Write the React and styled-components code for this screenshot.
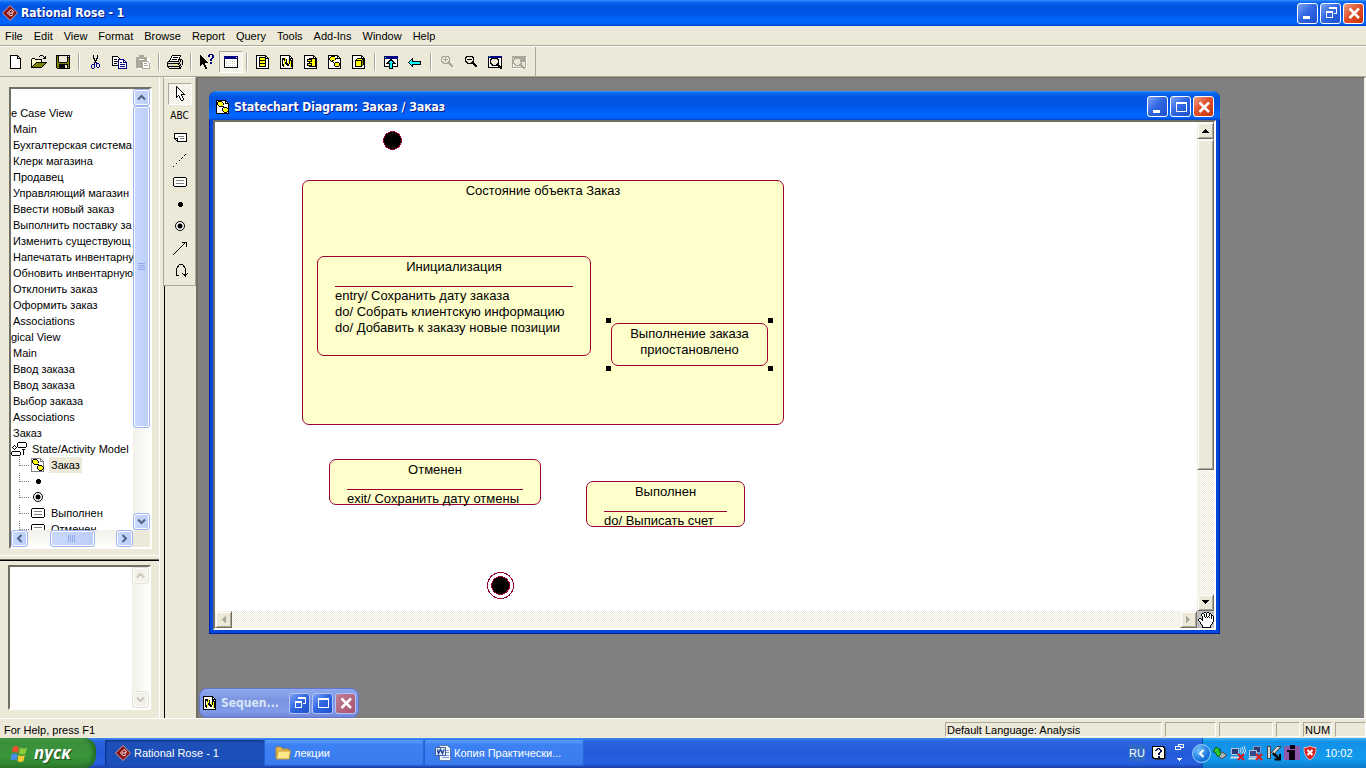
import React from "react";
import styled, { createGlobalStyle, css } from "styled-components";

const FACE = "#ece9d8";
const SHADE = "#aca899";
const DARK = "#716f64";
const WINE = "#990033";
const NOTE = "#ffffcc";

const GlobalStyle = createGlobalStyle`
  * { box-sizing: border-box; }
  body { margin: 0; background: #808080; }
  button { padding: 0; border: 0; margin: 0; background: none; font: inherit; color: inherit; }
  ul, ol { list-style: none; margin: 0; padding: 0; }
  svg { display: block; flex: none; }
`;

const Screen = styled.div`
  display: flex;
  flex-direction: column;
  height: 100vh;
  min-height: 600px;
  overflow: hidden;
  background: ${FACE};
  color: #000;
  font: 11px/16px "Liberation Sans", Arial, sans-serif;
`;

/* ---------- icons ---------- */

const Svg = ({ w = 16, h = 16, smooth, children }) => (
  <svg
    width={w}
    height={h}
    viewBox={`0 0 ${w} ${h}`}
    fill="none"
    shapeRendering={smooth ? "auto" : "crispEdges"}
    aria-hidden="true"
  >
    {children}
  </svg>
);

const Pixels = ({ rows, colors }) => {
  const palette = { "#": "#000", w: "#fff", ...colors };
  return (
    <Svg w={rows[0].length} h={rows.length}>
      {rows.flatMap((row, y) =>
        [...row].map((c, x) =>
          palette[c] ? <rect key={`${x}-${y}`} x={x} y={y} width="1" height="1" fill={palette[c]} /> : null
        )
      )}
    </Svg>
  );
};

const RoseIcon = () => (
  <Svg smooth>
    <path d="M8 .5 15.5 8 8 15.5.5 8z" fill="#8c1010" stroke="#c9a9a0" />
    <path d="M11.500 6.500 9 4.500 5.500 8 8.500 11l2.500-1.500M7 8h4V6.500" stroke="#fff" />
  </Svg>
);

const NewIcon = () => (
  <Svg>
    <path d="M3.500 1.500h7l3 3v10h-10z" fill="#fff" stroke="#000" />
    <path d="M10.500 1.500v3h3" stroke="#000" />
  </Svg>
);

const OpenIcon = () => (
  <Pixels
    colors={{ y: "#ffff99", o: "#808000" }}
    rows={[
      "................",
      ".........###....",
      "........#...#.#.",
      ".............##.",
      ".###........###.",
      "#ywy#######.....",
      "#wywywywyw#.....",
      "#ywywywywy#.....",
      "#wywy###########",
      "#ywy#ooooooooo#.",
      "#wy#ooooooooo#..",
      "#y#ooooooooo#...",
      "##ooooooooo#....",
      "###########.....",
      "................",
      "................",
    ]}
  />
);

const SaveIcon = () => (
  <Pixels
    colors={{ o: "#808000", g: "#ece9d8" }}
    rows={[
      "................",
      ".##############.",
      ".#o#gggggggg#g#.",
      ".#o#gggggggg###.",
      ".#o#gggggggg#o#.",
      ".#o#gggggggg#o#.",
      ".#o#gggggggg#o#.",
      ".#o#gggggggg#o#.",
      ".#oo########oo#.",
      ".#oooooooooooo#.",
      ".#oo#########o#.",
      ".#oo######gg#o#.",
      ".#oo######gg#o#.",
      ".#oo######gg#o#.",
      "..#############.",
      "................",
    ]}
  />
);

const CutIcon = () => (
  <Pixels
    colors={{ b: "#000080" }}
    rows={[
      "................",
      "......#...#.....",
      "......#...#.....",
      "......#...#.....",
      "......##.##.....",
      ".......#.#......",
      ".......###......",
      "........#.......",
      ".......b#b......",
      ".......b.bbb....",
      ".....bbb.b..b...",
      "....b..b.b..b...",
      "....b..b.b..b...",
      "....b..b..bb....",
      ".....bb.........",
      "................",
    ]}
  />
);

const CopyIcon = () => (
  <Svg>
    <path d="M1.500 2.500h5l2 2v7h-7z" fill="#fff" stroke="#000" />
    <path d="M3 5.500h3M3 7.500h4M3 9.500h3" stroke="#000" />
    <path d="M7.500 5.500h5l3 3v6h-8z" fill="#fff" stroke="#000080" />
    <path d="M12.500 5.500v3h3M9 8.500h2M9 10.500h5M9 12.500h5" stroke="#000080" />
  </Svg>
);

const PasteIcon = () => (
  <Svg>
    <path d="M2 4h13v11H2z" fill="#fff" />
    <path d="M1 3h3V1h5v2h3v4H7v7H1z" fill={SHADE} />
    <path d="M4 5h5" stroke="#fff" />
    <path d="M7.500 7.500h5l2 2v5h-7z" fill="#fff" stroke={SHADE} />
    <path d="M9 9.500h3M9 11.500h4" stroke={SHADE} />
  </Svg>
);

const PrintIcon = () => (
  <Pixels
    colors={{ g: "#dddacb", y: "#ffff00", d: "#808080" }}
    rows={[
      "................",
      ".....#########..",
      "....#wwwwwwww#..",
      "....#w#####w#...",
      "...#wwwwwwww#...",
      "...#w#####w####.",
      "..#wwwwwwww#g#g#",
      ".###########g#g#",
      "#ggggggggggg#gg#",
      "#############gg#",
      "#gggggggyyg#g#g#",
      "#ggggggggggg##..",
      "#############g#.",
      ".#gggggggggg##..",
      "..############..",
      "................",
    ]}
  />
);

const HelpPointerIcon = () => (
  <Pixels
    colors={{ b: "#000080" }}
    rows={[
      "..........bbbb..",
      ".#.......bb..bb.",
      ".##......bb..bb.",
      ".###.........bb.",
      ".####.......bb..",
      ".#####.....bb...",
      ".######....bb...",
      ".#######........",
      ".########..bb...",
      ".#####.....bb...",
      ".##.##..........",
      ".#...##.........",
      ".....##.........",
      "......##........",
      "......##........",
      "................",
    ]}
  />
);

const WindowIcon = () => (
  <Svg>
    <path d="M1.500 2.500h13v11h-13z" fill="#fff" stroke="#000" />
    <path d="M1 2h14v3H1z" fill="#000080" />
    <path d="M13 3.500h1" stroke="#fff" />
    <path d="M3 7.500h10M3 9.500h10M3 11.500h10" stroke="#d4d0c4" strokeDasharray="1 1" />
  </Svg>
);

const Page = ({ edge = "#000", children }) => (
  <Svg>
    <path d="M1.500 1.500h9l3 3v10h-12z" fill="#fff" stroke={edge} />
    <path d="M10.500 1.500v3h3" stroke={edge} />
    {children}
  </Svg>
);

const ClassIcon = () => (
  <Page>
    <path d="M4.500 3.500h6v9h-6z" fill="#ff0" stroke="#000" />
    <path d="M4 6.500h6M4 9.500h6" stroke="#000" />
  </Page>
);

const SequenceIcon = () => (
  <Page>
    <path d="M5 7h1v5H5zM6 4h1v4H6zM9 7h1v5H9zM11 7h1v6h-1z" fill="#ff0" />
    <path
      d="M3.500 4v8M4.500 4v2M5.500 4v3M7.500 5v6M8.500 9v3M10.500 5v5M12.500 6v7M6.500 8v2M9.500 10v2M11.500 5v2M4.500 10v3"
      stroke="#000"
    />
  </Page>
);

const ComponentIcon = () => (
  <Page>
    <path d="M6.500 4.500h6v8h-6z" fill="#ff0" stroke="#000" />
    <path d="M4.500 5.500h4v2h-4zM4.500 9.500h4v2h-4z" fill="#ff0" stroke="#000" />
  </Page>
);

const StateIcon = () => (
  <Page>
    <path d="M4 3h4v1h1v2H8v1H4V6H3V4h1zM9 8h3v1h1v3h-1v1H8v-1H7V9h2z" fill="#ff0" />
    <path d="M4 2.500h4M3.500 3v1M2.500 4v2M3.500 6v1M4 7.500h2M8 4.500h2M8.500 5v1M8 8.500h4M7.500 9v3M12.500 9v3M8 12.500h4M6 8.500h1M5 6.500h2" stroke="#000" />
  </Page>
);

const StatechartIcon = ({ edge }) => (
  <Page edge={edge}>
    <path d="M3 3h4v1h1v3H4V6H3zM9 9h3v1h1v3H9v-1H8v-2h1z" fill="#ff0" />
    <path
      d="M3 2.500h4M2.500 3v3M7.500 3v1M8.500 4v2M3 6.500h1M4 7.500h3M7 7.500h2M8 8.500h4M7.500 9v3M12.500 9v1M13.500 10v2M12.500 12v1M8 12.500h1M9 13.500h3"
      stroke="#000"
    />
  </Page>
);

const DeployIcon = () => (
  <Page>
    <path d="M4.500 6.500l2-2h6v6l-2 2h-6z" fill="#ff0" stroke="#000" />
    <path d="M4.500 6.500h6v6M10.500 6.500l2-2" stroke="#000" />
    <path d="M11.500 6v6" stroke="#808000" />
  </Page>
);

const ParentIcon = () => (
  <Svg>
    <path d="M1.500 2.500h13v10h-13z" fill="#fff" stroke="#000" />
    <path d="M1 2h14v3H1z" fill="#000080" />
    <path d="M2 3.500h1" stroke="#0f0" />
    <path d="M8 5.500l4 4H9.500v5h-3v-5H4z" fill="#0ff" stroke="#000" />
  </Svg>
);

const BackIcon = () => (
  <Svg>
    <path d="M1.500 8.500l4-4v2.500h8v3h-8v2.500z" fill="#0ff" stroke="#000" />
  </Svg>
);

const Lens = ({ cx = 6, cy = 6, color = "#000", sign }) => (
  <>
    <path
      d={`M${cx - 1.5} ${cy - 4}h4l2 2v3l-2 2h-4l-2-2v-3z`}
      fill={color === "#000" ? "#ece9d8" : "none"}
      stroke={color}
    />
    {sign && <path d={sign} stroke={color} />}
    <path d={`M${cx + 3} ${cy + 2}l5 5`} stroke={color} strokeWidth="2" />
  </>
);

const ZoomInIcon = () => (
  <Svg>
    <path d="M10 9l6 6" stroke="#fff" />
    <Lens color={SHADE} sign="M4 5.500h5M6.500 3v5" />
  </Svg>
);
const ZoomOutIcon = () => (
  <Svg>
    <Lens sign="M4 5.500h5" />
  </Svg>
);
const FitIcon = () => (
  <Svg>
    <path d="M1.500 2.500h13v11h-13z" fill="#fff" stroke="#000" />
    <path d="M1 2h14v2H1z" fill="#000080" />
    <path d="M2 2.500h1" stroke="#0f0" />
    <Lens cx={7} cy={8} />
  </Svg>
);
const UndoFitIcon = () => (
  <Svg>
    <path d="M2.500 3.500h13v11h-13z" stroke="#fff" />
    <path d="M1.500 2.500h13v11h-13z" stroke={SHADE} />
    <path d="M1 2h14v2H1zM9 4h5v4H9z" fill={SHADE} />
    <Lens cx={6} cy={8} color={SHADE} />
  </Svg>
);

const PointerIcon = () => (
  <Pixels
    rows={[
      "....#...........",
      "....##..........",
      "....#w#.........",
      "....#ww#........",
      "....#www#.......",
      "....#wwww#......",
      "....#wwwww#.....",
      "....#wwwwww#....",
      "....#wwww####...",
      "....#w#ww#......",
      "....##.#ww#.....",
      "....#..#ww#.....",
      "........#ww#....",
      "........#ww#....",
      ".........##.....",
      "................",
    ]}
  />
);
const NoteIcon = () => (
  <Svg>
    <path d="M2.500 3.500h12v8h-9l-3-3z" fill="#fff" stroke="#000" />
    <path d="M2.500 8.500h3v3" stroke="#000" />
    <path d="M6 6.500h6M8 8.500h4" stroke="#808080" />
  </Svg>
);
const AnchorIcon = () => (
  <Svg>
    <path d="M1 15 15 1" stroke="#000" strokeDasharray="2 2" />
  </Svg>
);
const StateShape = () => (
  <Svg>
    <rect x="1.500" y="3.500" width="13" height="9" rx="2" fill="#fff" stroke="#000" />
    <path d="M4 6.500h8M4 9.500h8" stroke="#808080" />
  </Svg>
);
const StartShape = () => (
  <Svg>
    <path d="M7 6h2v1h1v2H9v1H7V9H6V7h1z" fill="#000" stroke="#000" />
  </Svg>
);
const EndShape = () => (
  <Svg smooth>
    <circle cx="8" cy="8" r="4.500" fill="#fff" stroke="#000" />
    <circle cx="8" cy="8" r="2.500" fill="#000" />
  </Svg>
);
const TransitionIcon = () => (
  <Svg>
    <path d="M1 15 14 2M10 2.500h4.500V7" stroke="#000" />
  </Svg>
);
const LoopIcon = () => (
  <Svg>
    <path d="M7 13.500H4.500v-2M4.500 12V6.500l3-4h3l3 4v7M10 11l3.500 3 2-3" stroke="#000" />
  </Svg>
);
const StateModelIcon = () => (
  <Svg>
    <path
      d="M7.500 1.500h7l1 1v3l-1 1h-7l-1-1v-3zM1.500 10.500h7l1 1v2l-1 1h-7l-1-1v-2zM3.500 4.500l2 2-2 2-2-2z"
      fill="#fff"
      stroke="#000"
    />
    <path d="M12.500 8v6M11 8.500h3" stroke="#000" />
  </Svg>
);
const HandIcon = () => (
  <Pixels
    rows={[
      "......##.##.....",
      "....##ww#ww##...",
      "...#ww#w#ww#w#..",
      "...#ww#w#ww#w##.",
      "....#w#w#w#ww#w#",
      "....#ww#w#w#w#w#",
      ".##.#wwwwwwww#w#",
      "#ww##wwwwwwwwww#",
      "#www#wwwwwwwwww#",
      ".#wwwwwwwwwwwww#",
      "..#wwwwwwwwwww#.",
      "..#wwwwwwwwwww#.",
      "...#wwwwwwwww#..",
      "....#wwwwwww#...",
      "....#wwwwwww#...",
      "....#########...",
    ]}
  />
);

const MinimizeGlyph = () => (
  <Svg>
    <path d="M3 11h7v3H3z" fill="#fff" />
  </Svg>
);
const RestoreGlyph = () => (
  <Svg>
    <path d="M6 3h8v1H6zM6 2h8v1H6zM13 4h1v5h-1zM11 8h2v1h-2zM3 6h7v2H3zM3 8h1v4H3zM9 8h1v4H9zM3 12h7v1H3z" fill="#fff" />
  </Svg>
);
const MaximizeGlyph = () => (
  <Svg>
    <path d="M3.500 3.500h10v9h-10z" stroke="#fff" />
    <path d="M3 3h11v2H3z" fill="#fff" />
  </Svg>
);
const CloseGlyph = () => (
  <Svg smooth>
    <path d="M3.500 3.500l9.500 9.500M13 3.500l-9.500 9.500" stroke="#fff" strokeWidth="2.500" />
  </Svg>
);

/* ---------- window chrome ---------- */

const blueTitle = "linear-gradient(#3a93ff 0, #0a6af0 2px, #0054e3 6px, #0055e5 50%, #0066ff 80%, #0062f8 92%, #0044cc)";

const TitleBar = styled.div`
  display: flex;
  align-items: center;
  gap: 3px;
  flex: none;
  height: ${(p) => p.$height || 26}px;
  padding: 0 2px;
  background: ${(p) => (p.$inactive ? "linear-gradient(#8fa9ee, #7a94e0 40%, #7f9ae8 80%, #7286d8)" : blueTitle)};
  border-radius: ${(p) => p.$radius || "0"};
`;

const Title = styled.h1`
  flex: 1;
  min-width: 0;
  margin: 0;
  white-space: nowrap;
  overflow: hidden;
  color: ${(p) => (p.$inactive ? "#d8e4f8" : "#fff")};
  font: bold 12px/18px "DejaVu Sans Condensed", Tahoma, sans-serif;
  text-shadow: ${(p) => (p.$inactive ? "none" : "1px 1px 0 #0a1883")};
`;

const Controls = styled.div`
  display: flex;
  gap: 2px;
`;

const ControlButton = styled.button`
  display: grid;
  place-items: center;
  width: 21px;
  height: 21px;
  border: 1px solid ${(p) => (p.$dim ? "#b4c4f2" : "#fff")};
  border-radius: 3px;
  background: ${(p) =>
    p.$close
      ? p.$dim
        ? "linear-gradient(135deg, #c08098, #a85070)"
        : "linear-gradient(135deg, #f0a088, #e0512c 45%, #c83408)"
      : "linear-gradient(135deg, #7ea4f4, #3268e4 45%, #1c50cc)"};
`;

const WindowControls = ({ middle, dim }) => (
  <Controls>
    <ControlButton $dim={dim} aria-label={dim ? "Restore" : "Minimize"}>
      {dim ? <RestoreGlyph /> : <MinimizeGlyph />}
    </ControlButton>
    <ControlButton $dim={dim} aria-label="Resize">{middle}</ControlButton>
    <ControlButton $dim={dim} $close aria-label="Close">
      <CloseGlyph />
    </ControlButton>
  </Controls>
);

const MenuBar = styled.nav`
  display: flex;
  flex: none;
  gap: 11px;
  height: 20px;
  padding: 1px 5px;
  border-bottom: 1px solid ${SHADE};
`;

const MenuItem = styled.button`
  line-height: 16px;
  white-space: nowrap;
`;

const Toolbar = styled.div`
  display: flex;
  align-items: center;
  flex: none;
  height: 31px;
  border-top: 1px solid #fff;
  border-bottom: 1px solid ${SHADE};
`;

const ToolGroup = styled.div`
  display: flex;
  align-items: center;
  align-self: stretch;
  padding: 0 4px 0 3px;
  border-right: 1px solid ${SHADE};
`;

const pressed = css`
  border: 1px solid;
  border-color: ${SHADE} #fff #fff ${SHADE};
  background: conic-gradient(#fff 25%, ${FACE} 0 50%, #fff 0 75%, ${FACE} 0) 0 0 / 2px 2px;
`;

const ToolButton = styled.button`
  display: grid;
  place-items: center;
  width: 24px;
  height: 22px;
  ${(p) => p.$pressed && pressed}
`;

const Separator = styled.span`
  width: 2px;
  height: 18px;
  margin: 0 3px;
  border-left: 1px solid ${SHADE};
  border-right: 1px solid #fff;
`;

/* ---------- scroll bars ---------- */

const XpTrack = styled.div`
  display: flex;
  flex: ${(p) => (p.$row ? "1" : "none")};
  flex-direction: ${(p) => (p.$row ? "row" : "column")};
  justify-content: space-between;
  ${(p) => (p.$row ? "height: 17px;" : "width: 17px;")}
  background: linear-gradient(${(p) => (p.$row ? "180deg" : "90deg")}, #f2f1ea, #fefefc);
`;

const XpPart = styled.button`
  display: grid;
  place-items: center;
  flex: ${(p) => (p.$thumb ? "0 0 " + p.$thumb : "0 0 17px")};
  border: 1px solid ${(p) => (p.$off ? "#e4e2d4" : "#9db5ee")};
  border-radius: 3px;
  box-shadow: inset 0 0 0 1px #fff;
  background: ${(p) => (p.$off ? "#f3f2ea" : "linear-gradient(90deg, #c9d8fc, #bccdfa)")};
`;

const Spacer = styled.span`
  flex: ${(p) => p.$size};
`;

const Chevron = ({ turn = 0, color = "#4d6185" }) => (
  <svg width="9" height="9" viewBox="0 0 9 9" fill="none" aria-hidden="true">
    <path d="M1 6.500 4.500 3 8 6.500" stroke={color} strokeWidth="2" transform={`rotate(${turn} 4.5 4.5)`} />
  </svg>
);

const Grip = ({ row }) => (
  <svg width="8" height="8" viewBox="0 0 8 8" aria-hidden="true" shapeRendering="crispEdges">
    <path
      d={row ? "M.5 0v7M2.500 0v7M4.500 0v7M6.500 0v7" : "M0 .5h7M0 2.500h7M0 4.500h7M0 6.500h7"}
      stroke="#8fa8ec"
    />
  </svg>
);

const ClassicTrack = styled.div`
  display: flex;
  flex: none;
  flex-direction: ${(p) => (p.$row ? "row" : "column")};
  justify-content: space-between;
  ${(p) => (p.$row ? "height: 17px; flex: 1;" : "width: 17px;")}
  background: conic-gradient(#fff 25%, ${FACE} 0 50%, #fff 0 75%, ${FACE} 0) 0 0 / 2px 2px;
`;

const ClassicPart = styled.button`
  display: grid;
  place-items: center;
  flex: 0 0 ${(p) => p.$size || "17px"};
  border: 1px solid;
  border-color: #f4f2e8 ${DARK} ${DARK} #f4f2e8;
  box-shadow: inset 1px 1px 0 #fff, inset -1px -1px 0 ${SHADE};
  background: ${FACE};
`;

const Arrow = ({ turn = 0, color = "#000" }) => (
  <svg width="7" height="7" viewBox="0 0 7 7" aria-hidden="true" shapeRendering="crispEdges">
    <path d="M3 2h1v1h1v1h1v1h1v1H0V5h1V4h1V3h1z" fill={color} transform={`rotate(${turn} 3.5 3.5)`} />
  </svg>
);

/* ---------- left side ---------- */

const Workspace = styled.main`
  display: flex;
  flex: 1;
  min-height: 0;
`;

const Side = styled.aside`
  display: flex;
  flex-direction: column;
  flex: none;
  width: 160px;
  border-right: 1px solid #fff;
`;

const BrowserPane = styled.section`
  display: flex;
  flex: 1;
  min-height: 0;
  padding: 10px 7px 6px 9px;
  border-bottom: 1px solid #fff;
`;

const DocumentPane = styled.section`
  display: flex;
  flex: 0 0 159px;
  margin-top: 3px;
  padding: 5px 8px 8px;
  border-top: 1px solid ${DARK};
  box-shadow: inset 0 1px 0 #000;
`;

const Sunken = styled.div`
  display: flex;
  flex-direction: column;
  flex: 1;
  min-width: 0;
  border: 2px solid;
  border-color: ${DARK} #fff #fff ${DARK};
  background: ${(p) => p.$bg || "#fff"};
`;

const Split = styled.div`
  display: flex;
  flex: ${(p) => (p.$fixed ? "none" : "1")};
  min-height: 0;
`;

const Tree = styled.ul`
  flex: 1;
  min-width: 0;
  padding-top: 16px;
  overflow: hidden;
  background: #fff;
`;

const TreeRow = styled.li`
  display: flex;
  align-items: center;
  gap: 3px;
  height: 16px;
  padding-left: ${(p) => (p.$deep ? 8 : 0)}px;
  white-space: nowrap;
`;

const TreeLabel = styled.span`
  padding: 0 ${(p) => (p.$root ? 0 : 2)}px;
  background: ${(p) => (p.$selected ? FACE : "transparent")};
`;

const Branch = styled.span`
  align-self: flex-start;
  width: 10px;
  height: 9px;
  border-left: 1px dotted #808080;
  border-bottom: 1px dotted #808080;
  margin-right: -2px;
`;

const DocumentBox = styled.textarea`
  flex: 1;
  min-width: 0;
  border: 0;
  padding: 2px;
  resize: none;
  outline: 0;
  overflow: hidden;
  background: #fff;
  font: inherit;
`;

const ToolboxColumn = styled.div`
  display: flex;
  flex-direction: column;
  flex: none;
  width: 38px;
  padding-left: 3px;
  border-right: 2px solid ${DARK};
`;

const Toolbox = styled.div`
  display: flex;
  flex-direction: column;
  align-items: center;
  height: 209px;
  flex: none;
  padding-top: 5px;
  border: 1px solid;
  border-color: #fff ${SHADE} ${SHADE} ${SHADE};
`;

const ToolboxRest = styled.div`
  flex: 1;
  border-left: 1px solid #000;
  margin-left: 1px;
`;

const TextTool = styled.span`
  font: 10px/16px "DejaVu Sans Condensed", sans-serif;
`;

/* ---------- diagram windows ---------- */

const Desktop = styled.section`
  position: relative;
  flex: 1;
  min-width: 0;
  overflow: hidden;
  border-top: 1px solid ${DARK};
  border-right: 2px solid #f6f4ea;
  background: #808080;
`;

const DiagramWindow = styled.section`
  position: absolute;
  left: 11px;
  top: 13px;
  display: flex;
  flex-direction: column;
  width: 1011px;
  height: 543px;
  padding: 0 4px 4px;
  border-radius: 8px 8px 0 0;
  background: #0048dc;
  box-shadow: inset -1px -1px 0 #001ea0, inset 1px 0 0 #001ea0;
`;

const DiagramTitle = styled(TitleBar)`
  margin: 0 -4px;
  padding: 2px 6px 0;
`;

const Client = styled.div`
  display: flex;
  flex-direction: column;
  flex: 1;
  min-height: 0;
  border: 2px solid;
  border-color: ${DARK} #fff #fff ${DARK};
  background: ${FACE};
`;

const Canvas = styled.div`
  position: relative;
  flex: 1;
  min-width: 0;
  overflow: hidden;
  background: #fff;
`;

const Corner = styled.button`
  display: grid;
  place-items: center;
  width: 17px;
  height: 17px;
  background: #c0c0c0;
`;

const MinimizedWindow = styled.section`
  position: absolute;
  left: 1px;
  bottom: 0;
  width: 160px;
  border: 1px solid #6474cc;
  border-radius: 8px;
  background: #6474cc;
`;

const State = styled.article`
  position: absolute;
  left: ${(p) => p.$x}px;
  top: ${(p) => p.$y}px;
  width: ${(p) => p.$w}px;
  height: ${(p) => p.$h}px;
  padding: 2px 17px 0;
  border: 1px solid ${WINE};
  border-radius: 7px;
  background: ${NOTE};
  font-size: 13px;
  line-height: 16px;
  white-space: nowrap;
`;

const StateName = styled.h2`
  margin: 0;
  font: inherit;
  text-align: center;
  white-space: pre-line;
`;

const Actions = styled.ul`
  margin-top: 11px;
  padding-top: 1px;
  border-top: 1px solid ${WINE};
`;

const Handle = styled.i`
  position: absolute;
  width: 5px;
  height: 5px;
  background: #000;
  ${(p) => p.$v}: -6px;
  ${(p) => p.$h}: -6px;
`;

const Marker = styled.div`
  position: absolute;
  left: ${(p) => p.$x}px;
  top: ${(p) => p.$y}px;
`;

/* ---------- status bar and task bar ---------- */

const StatusBar = styled.footer`
  display: flex;
  flex: none;
  gap: 3px;
  height: 20px;
  padding: 3px 0 0 4px;
  border-top: 1px solid #fff;
`;

const StatusText = styled.span`
  flex: 1;
  white-space: nowrap;
`;

const StatusCell = styled.span`
  width: ${(p) => p.$w}px;
  height: 15px;
  padding-left: 1px;
  border: 1px solid;
  border-color: ${SHADE} #fff #fff ${SHADE};
  line-height: 14px;
  white-space: nowrap;
`;

const Taskbar = styled.div`
  display: flex;
  align-items: stretch;
  flex: none;
  height: 30px;
  color: #fff;
  background: linear-gradient(#3f8cf3 0, #2a66dd 3px, #245bdb 50%, #2560e0 85%, #1941a5);
`;

const StartButton = styled.button`
  display: flex;
  align-items: center;
  gap: 5px;
  width: 96px;
  margin-right: 9px;
  padding-left: 10px;
  border-radius: 0 12px 12px 0;
  background: linear-gradient(#5eac56 0, #3c8f3c 4px, #38963a 60%, #2f7d2f);
  box-shadow: inset -3px 0 4px #1f6a22;
  font: italic bold 17px/24px "Open Sans", "Noto Sans", sans-serif;
  text-shadow: 1px 1px 1px #1a4a1a;
`;

const TaskButton = styled.button`
  display: flex;
  align-items: center;
  gap: 3px;
  flex: 0 1 159px;
  min-width: 60px;
  margin: 2px 1px 2px 0;
  padding: 0 0 1px 10px;
  border-radius: 2px;
  overflow: hidden;
  white-space: nowrap;
  background: ${(p) => (p.$active ? "#1c4fb8" : "linear-gradient(#5a9bfa, #3c81f3 5px, #3a7bee)")};
  box-shadow: ${(p) => (p.$active ? "inset 1px 1px 2px #0c2f80" : "inset -1px -1px 1px #2a62d4")};
`;

const Language = styled.div`
  display: flex;
  align-items: center;
  gap: 7px;
  margin-left: auto;
  padding-right: 18px;
`;

const LanguageCode = styled.button`
  width: 16px;
  height: 16px;
  background: #316ac5;
`;

const Tray = styled.div`
  display: flex;
  align-items: center;
  gap: 2px;
  flex: none;
  width: 164px;
  background: linear-gradient(#38b4f4 0, #1290e8 4px, #119bee 70%, #0d78c8);
  border-left: 1px solid #0a4fa8;
`;

const TrayToggle = styled.button`
  display: grid;
  place-items: center;
  width: 19px;
  height: 19px;
  margin-left: -11px;
  margin-right: -1px;
  border-radius: 50%;
  border: 1px solid #9cd4f8;
  background: radial-gradient(circle at 35% 30%, #7ac4fa, #1878e0 60%, #1060c8);
`;

const Clock = styled.time`
  margin-left: 5px;
`;

const StartLogo = () => (
  <svg width="19" height="19" viewBox="0 0 19 19" aria-hidden="true">
    <path d="M3 3q3-2 6 0l-1 6q-3-2-6 0z" fill="#e8562a" />
    <path d="M10 3.500q3 2 7 0l-1.500 6q-3 2-6.500 0z" fill="#8ccc3c" />
    <path d="M1.500 10.500q3-2 6 0l-1 6q-3-2-6 0z" fill="#4c8cf0" />
    <path d="M8.500 11q3 2 6.500 0l-1.500 6q-3 2-6 0z" fill="#f8c830" />
  </svg>
);

const FolderIcon = () => (
  <Svg smooth>
    <path d="M1 3q0-1 1-1h4l1.500 2H13q1 0 1 1v8H1z" fill="#e8c050" stroke="#b8862a" />
    <path d="M3 6h12.500L14 14H1.500z" fill="#ffe88c" stroke="#c89830" />
  </Svg>
);

const WordIcon = () => (
  <Svg smooth>
    <path d="M4.500.5h8l3 3v12h-11z" fill="#f4f8ff" stroke="#6078a8" />
    <path d="M7 10.500h7M7 12.500h7M11 5.500h3M11 7.500h3" stroke="#7c98d0" />
    <path d="M.5 2.500h10v8H.5z" fill="#e4ecfa" stroke="#44609c" />
    <path d="M2.500 4.500l1 4 2-4 2 4 1.500-4" stroke="#2448a0" strokeWidth="1.500" />
  </Svg>
);

const HelpBox = () => (
  <Pixels
    colors={{ y: "#fffff0", b: "#101060", s: "#303850" }}
    rows={[
      "................",
      "############....",
      "#yyyyyyyyyy##...",
      "#yyyybbbyyyy#s..",
      "#yyybbybbyyy#s..",
      "#yybbyyybbyy#s..",
      "#yyyyyyybbyy#s..",
      "#yyyyyybbyyy#s..",
      "#yyyyybbyyyy#s..",
      "#yyyyybbyyyy#s..",
      "#yyyyyyyyyyy#s..",
      "#yyyyybbyyyy#s..",
      "##yyyybbyyyy#s..",
      ".############s..",
      "...sssssssss....",
      "................",
    ]}
  />
);

const BarRestore = () => (
  <svg width="9" height="18" viewBox="0 0 9 18" fill="none" aria-hidden="true" shapeRendering="crispEdges">
    <path d="M3 2.500V.5h5.500v3H6M.5 2.500h5v3h-5z" stroke="#fff" />
    <path d="M2 14h5v1H6v1H5v1H4v-1H3v-1H2z" fill="#fff" />
  </svg>
);

const EjectIcon = () => (
  <Svg smooth>
    <path d="M4 9l6 5 5-4-5-3z" fill="#a8b4b8" stroke="#404848" />
    <path d="M6 12L3 7H1l3-5 5 3H7l2 4z" fill="#2cc82c" stroke="#106010" />
  </Svg>
);
const RedCross = () => <path d="M8 9l6 6M14 9l-6 6" stroke="#e01818" strokeWidth="2" />;
const WirelessIcon = () => (
  <Svg smooth>
    <path d="M1.500 3.500h7v6h-7z" fill="#283c78" stroke="#b8c4d8" />
    <path d="M0 13.500h9v-2H1z" fill="#d8dce0" />
    <path d="M10 3q2 3 0 5M12 2q3 4 0 7M14 1q3 5 0 9" stroke="#d8e0e8" />
    <RedCross />
  </Svg>
);
const NetworkIcon = () => (
  <Svg smooth>
    <path d="M5.500 1.500h7v6h-7z" fill="#283c78" stroke="#8898c0" />
    <path d="M1.500 5.500h7v6h-7z" fill="#30488c" stroke="#b8c4d8" />
    <path d="M0 14.500h9v-2H1z" fill="#d8dce0" />
    <RedCross />
  </Svg>
);
const GuardIcon = () => (
  <Svg smooth>
    <path d="M1.500 1.500h3v12h-3z" fill="#d8d8d8" stroke="#404040" />
    <path d="M5 8l6-6.500h4L9 8l3 3" fill="#d8d8d8" stroke="#404040" />
    <path d="M7 7l6 5v-3h2v6.500H8.500v-2H11L6 9z" fill="#000" />
  </Svg>
);
const InfoIcon = () => (
  <Svg>
    <path d="M0 1h16v14H0z" fill="#9058a8" />
    <path d="M6 0h5v4H6zM5 5h6v10H5zM3 5h3v2H3z" fill="#080010" />
  </Svg>
);
const ShieldIcon = () => (
  <Svg smooth>
    <path d="M8 1q3 2 6 1.500Q14.500 11 8 15 1.500 11 2 2.500 5 3 8 1z" fill="#d82020" stroke="#e8b0b0" />
    <path d="M5.500 5l5 5M10.500 5l-5 5" stroke="#fff" strokeWidth="2" />
  </Svg>
);

/* ---------- data ---------- */

const menus = ["File", "Edit", "View", "Format", "Browse", "Report", "Query", "Tools", "Add-Ins", "Window", "Help"];

const tools = [
  ["New", NewIcon], ["Open", OpenIcon], ["Save", SaveIcon], null,
  ["Cut", CutIcon], ["Copy", CopyIcon], ["Paste", PasteIcon], null,
  ["Print", PrintIcon], null,
  ["Context help", HelpPointerIcon], ["Documentation", WindowIcon, true], null,
  ["Class diagram", ClassIcon], ["Interaction diagram", SequenceIcon], ["Component diagram", ComponentIcon],
  ["State diagram", StateIcon], ["Deployment diagram", DeployIcon], null,
  ["Browse parent", ParentIcon], ["Previous diagram", BackIcon], null,
  ["Zoom in", ZoomInIcon], ["Zoom out", ZoomOutIcon], ["Fit in window", FitIcon], ["Undo fit", UndoFitIcon],
];

const palette = [
  ["Text", () => <TextTool>ABC</TextTool>],
  ["Note", NoteIcon],
  ["Anchor", AnchorIcon],
  ["State", StateShape],
  ["Start state", StartShape],
  ["End state", EndShape],
  ["Transition", TransitionIcon],
  ["Transition to self", LoopIcon],
];

const tree = [
  { label: "e Case View", root: true },
  { label: "Main" },
  { label: "Бухгалтерская система" },
  { label: "Клерк магазина" },
  { label: "Продавец" },
  { label: "Управляющий магазин" },
  { label: "Ввести новый заказ" },
  { label: "Выполнить поставку за" },
  { label: "Изменить существующ" },
  { label: "Напечатать инвентарну" },
  { label: "Обновить инвентарную" },
  { label: "Отклонить заказ" },
  { label: "Оформить заказ" },
  { label: "Associations" },
  { label: "gical View", root: true },
  { label: "Main" },
  { label: "Ввод заказа" },
  { label: "Ввод заказа" },
  { label: "Выбор заказа" },
  { label: "Associations" },
  { label: "Заказ" },
  { label: "State/Activity Model", icon: <StateModelIcon /> },
  { label: "Заказ", icon: <StatechartIcon edge="#808080" />, deep: true, selected: true },
  { icon: <StartShape />, deep: true },
  { icon: <EndShape />, deep: true },
  { label: "Выполнен", icon: <StateShape />, deep: true },
  { label: "Отменен", icon: <StateShape />, deep: true },
];

const states = [
  { name: "Состояние объекта Заказ", x: 87, y: 58, w: 482, h: 245 },
  {
    name: "Инициализация", x: 102, y: 134, w: 274, h: 100,
    actions: ["entry/ Сохранить дату заказа", "do/ Собрать клиентскую информацию", "do/ Добавить к заказу новые позиции"],
  },
  { name: "Выполнение заказа\nприостановлено", x: 396, y: 201, w: 157, h: 43, selected: true },
  { name: "Отменен", x: 114, y: 337, w: 212, h: 46, actions: ["exit/ Сохранить дату отмены"] },
  { name: "Выполнен", x: 371, y: 359, w: 159, h: 46, actions: ["do/ Выписать счет"] },
];

export default function App() {
  return (
    <Screen>
      <GlobalStyle />
      <TitleBar>
        <RoseIcon />
        <Title>Rational Rose - 1</Title>
        <WindowControls middle={<RestoreGlyph />} />
      </TitleBar>
      <MenuBar>
        {menus.map((m) => (
          <MenuItem key={m}>{m}</MenuItem>
        ))}
      </MenuBar>
      <Toolbar>
        <ToolGroup>
          {tools.map((t, i) => {
            if (!t) return <Separator key={i} />;
            const [label, Icon, on] = t;
            return (
              <ToolButton key={label} aria-label={label} $pressed={on}>
                <Icon />
              </ToolButton>
            );
          })}
        </ToolGroup>
      </Toolbar>

      <Workspace>
        <Side>
          <BrowserPane>
            <Sunken $bg={FACE}>
              <Split>
                <Tree>
                  {tree.map((row, i) => (
                    <TreeRow key={i} $deep={row.deep}>
                      {row.deep && <Branch />}
                      {row.icon}
                      {row.label && (
                        <TreeLabel $root={row.root} $selected={row.selected}>
                          {row.label}
                        </TreeLabel>
                      )}
                    </TreeRow>
                  ))}
                </Tree>
                <XpTrack>
                  <XpPart aria-label="Scroll up"><Chevron /></XpPart>
                  <XpPart $thumb="73%" aria-label="Scroll position"><Grip /></XpPart>
                  <Spacer $size="1" />
                  <XpPart aria-label="Scroll down"><Chevron turn={180} /></XpPart>
                </XpTrack>
              </Split>
              <Split $fixed>
                <XpTrack $row>
                  <XpPart aria-label="Scroll left"><Chevron turn={-90} /></XpPart>
                  <Spacer $size="1" />
                  <XpPart $thumb="45px" aria-label="Horizontal position"><Grip row /></XpPart>
                  <Spacer $size="1" />
                  <XpPart aria-label="Scroll right"><Chevron turn={90} /></XpPart>
                </XpTrack>
                <Spacer $size="0 0 17px" />
              </Split>
            </Sunken>
          </BrowserPane>
          <DocumentPane>
            <Sunken>
              <Split>
                <DocumentBox aria-label="Documentation" />
                <XpTrack>
                  <XpPart $off aria-label="Scroll up"><Chevron color="#c9c7ba" /></XpPart>
                  <XpPart $off aria-label="Scroll down"><Chevron turn={180} color="#c9c7ba" /></XpPart>
                </XpTrack>
              </Split>
            </Sunken>
          </DocumentPane>
        </Side>

        <ToolboxColumn>
          <Toolbox>
            <ToolButton $pressed aria-label="Selection"><PointerIcon /></ToolButton>
            {palette.map(([label, Icon]) => (
              <ToolButton key={label} aria-label={label}><Icon /></ToolButton>
            ))}
          </Toolbox>
          <ToolboxRest />
        </ToolboxColumn>

        <Desktop>
          <DiagramWindow>
            <DiagramTitle $height={29} $radius="8px 8px 0 0">
              <StatechartIcon />
              <Title as="h2">Statechart Diagram: Заказ / Заказ</Title>
              <WindowControls middle={<MaximizeGlyph />} />
            </DiagramTitle>
            <Client>
              <Split>
                <Canvas>
                  <Marker $x={168} $y={9}>
                    <Svg w={19} h={19}>
                      <circle cx="9.500" cy="9.500" r="9" fill="#000" stroke={WINE} />
                    </Svg>
                  </Marker>
                  {states.map((s) => (
                    <State key={s.name} $x={s.x} $y={s.y} $w={s.w} $h={s.h}>
                      <StateName>{s.name}</StateName>
                      {s.actions && (
                        <Actions>
                          {s.actions.map((a) => (
                            <li key={a}>{a}</li>
                          ))}
                        </Actions>
                      )}
                      {s.selected &&
                        ["top", "bottom"].flatMap((v) =>
                          ["left", "right"].map((h) => <Handle key={v + h} $v={v} $h={h} />)
                        )}
                    </State>
                  ))}
                  <Marker $x={272} $y={450}>
                    <Svg w={27} h={27}>
                      <circle cx="13.500" cy="13.500" r="13" fill="#fff" stroke={WINE} />
                      <circle cx="13.500" cy="13.500" r="9" fill="#000" stroke={WINE} />
                    </Svg>
                  </Marker>
                </Canvas>
                <ClassicTrack>
                  <ClassicPart aria-label="Scroll up"><Arrow /></ClassicPart>
                  <ClassicPart $size="331px" aria-label="Vertical position" />
                  <Spacer $size="1" />
                  <ClassicPart aria-label="Scroll down"><Arrow turn={180} /></ClassicPart>
                </ClassicTrack>
              </Split>
              <Split $fixed>
                <ClassicTrack $row>
                  <ClassicPart aria-label="Scroll left"><Arrow turn={-90} color={SHADE} /></ClassicPart>
                  <ClassicPart aria-label="Scroll right"><Arrow turn={90} color={SHADE} /></ClassicPart>
                </ClassicTrack>
                <Corner aria-label="Pan"><HandIcon /></Corner>
              </Split>
            </Client>
          </DiagramWindow>

          <MinimizedWindow>
            <TitleBar $inactive $height={28} $radius="7px">
              <SequenceIcon />
              <Title as="h2" $inactive>Sequen...</Title>
              <WindowControls dim middle={<MaximizeGlyph />} />
            </TitleBar>
          </MinimizedWindow>
        </Desktop>
      </Workspace>

      <StatusBar>
        <StatusText>For Help, press F1</StatusText>
        <StatusCell $w={217}>Default Language: Analysis</StatusCell>
        <StatusCell $w={51} />
        <StatusCell $w={54} />
        <StatusCell $w={24} />
        <StatusCell $w={29}>NUM</StatusCell>
        <StatusCell $w={31} />
      </StatusBar>

      <Taskbar>
        <StartButton><StartLogo />пуск</StartButton>
        <TaskButton $active><RoseIcon />Rational Rose - 1</TaskButton>
        <TaskButton><FolderIcon />лекции</TaskButton>
        <TaskButton><WordIcon />Копия Практически...</TaskButton>
        <Language>
          <LanguageCode>RU</LanguageCode>
          <HelpBox />
          <BarRestore />
        </Language>
        <Tray>
          <TrayToggle aria-label="Show hidden icons"><Chevron turn={-90} color="#fff" /></TrayToggle>
          <EjectIcon />
          <WirelessIcon />
          <NetworkIcon />
          <GuardIcon />
          <InfoIcon />
          <ShieldIcon />
          <Clock>10:02</Clock>
        </Tray>
      </Taskbar>
    </Screen>
  );
}
